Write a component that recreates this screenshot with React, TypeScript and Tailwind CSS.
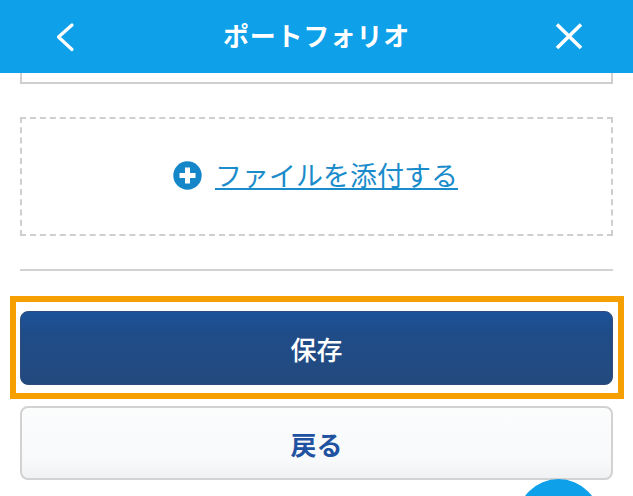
export default function App() {
  return (
    <div className="relative h-[496px] w-[633px] overflow-hidden bg-white font-['Noto_Sans_CJK_JP','Noto_Sans',sans-serif]">
      <header className="flex h-[73px] items-center justify-between bg-[#0ea0e9] px-[50px] text-white">
        <svg width="30" height="36" viewBox="0 0 30 36" fill="none" stroke="white" strokeWidth="3.2" strokeLinecap="round" strokeLinejoin="round">
          <path d="M22 6 L8.5 18 L22 30.5" />
        </svg>
        <h1 className="mt-[-3px] text-[26px] font-bold leading-none tracking-[0.7px]">ポートフォリオ</h1>
        <svg width="30" height="30" viewBox="0 0 30 30" fill="none" stroke="white" strokeWidth="3.6" className="mt-[-2px]">
          <path d="M4 3.5 L28 27 M28 3.5 L4 27" />
        </svg>
      </header>

      <main className="px-5">
        <div className="h-[11px] w-[593px] border-x-2 border-b-2 border-[#cfcfcf]" />

        <div className="mt-[33px] flex h-[119px] w-[593px] items-center justify-center border-2 border-dashed border-[#cfcfcf]">
          <a className="mt-[-3px] ml-[-2px] flex items-center text-[#1a8ccb]">
            <svg width="29" height="29" viewBox="0 0 29 29" className="mr-[13px]">
              <circle cx="14.5" cy="14.5" r="14.2" fill="#1587c8" />
              <path d="M14.5 6.5 V22.5 M6.5 14.5 H22.5" stroke="white" strokeWidth="5" />
            </svg>
            <span className="text-[27px] font-normal leading-[36px] underline decoration-2 underline-offset-[2px]">ファイルを添付する</span>
          </a>
        </div>

        <hr className="mt-[33px] h-[2px] w-[593px] border-0 bg-[#d2d2d2]" />

        <div className="ml-[-10px] mt-[25px] h-[103px] w-[614px] border-[6px] border-[#f5a000] py-[9px] pl-1 pr-[5px]">
          <button className="flex h-[74px] w-[593px] items-center justify-center rounded-[8px] border border-[#2f4d7a] bg-gradient-to-b from-[#1c5299] from-[2%] via-[#1f4c88] via-[30%] to-[#234a7f] text-[26px] font-medium text-white">
            保存
          </button>
        </div>

        <button className="mt-[7px] flex h-[74px] w-[593px] items-center justify-center rounded-[8px] border-2 border-[#d2d2d2] bg-gradient-to-b from-[#fbfcfc] via-[#f8f9fb] via-[75%] to-[#eff1f2] text-[26px] font-bold text-[#1f52a0]">
          戻る
        </button>
      </main>

      <div className="absolute left-[517px] top-[479px] h-[83px] w-[83px] rounded-full bg-[#0ea0e9]" />
    </div>
  );
}
